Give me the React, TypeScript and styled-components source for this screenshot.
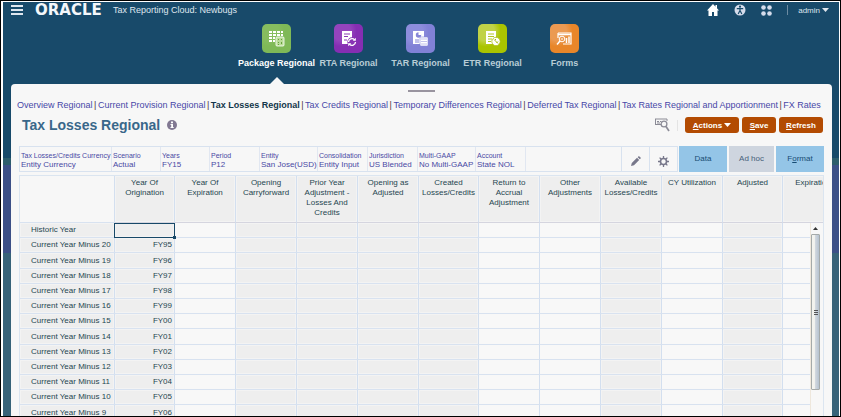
import React from "react";
import styled, { createGlobalStyle } from "styled-components";

const GlobalStyle = createGlobalStyle`
  *, *::before, *::after { box-sizing: border-box; }
  body { margin: 0; background: #fff; }
  body, button { font-family: "Liberation Sans", Arial, sans-serif; }
  button { border: 0; padding: 0; background: none; cursor: pointer; }
  svg { display: block; flex: none; }
`;

const Frame = styled.div`
  height: 100vh;
  overflow: hidden;
  border: 1px solid #000;
  padding: 1px 1px 0 2px;
  display: flex;
`;

const Shell = styled.div`
  flex: 1;
  min-width: 0;
  display: flex;
  flex-direction: column;
  padding: 0 7px 0 8px;
  background: linear-gradient(#184a6a 156px, #2d5d6c 156px 163px, #3c5087 163px 251px, #386379 251px);
`;

const Header = styled.header`
  height: 16px;
  display: flex;
  align-items: center;
  color: #dfe6ee;
  font-size: 9px;
`;

const MenuButton = styled.button`
  width: 12px;
  margin-right: 12px;
`;

const Brand = styled.span`
  width: 78px;
  color: #f4f7fa;
  font: bold 15px/14px "DejaVu Sans", sans-serif;
`;

const Product = styled.span`
  flex: 1;
`;

const HeaderTools = styled.nav`
  display: flex;
  align-items: center;
  gap: 15px;
  margin-right: 3px;
`;

const UserButton = styled.button`
  display: flex;
  align-items: center;
  gap: 2px;
  height: 10px;
  padding-left: 10px;
  border-left: 1px solid #6c8ba2;
  color: #dfe6ee;
  font-size: 8px;
`;

const Apps = styled.nav`
  display: flex;
  justify-content: center;
  height: 66px;
  padding: 6px 2px 0 0;
`;

const AppLink = styled.a<{ $active?: boolean }>`
  position: relative;
  width: 72px;
  display: flex;
  flex-direction: column;
  align-items: center;
  gap: 4px;
  color: ${(p) => (p.$active ? "#ffffff" : "#b9cdd6")};
  font: bold 9px/12px "Liberation Sans", Arial, sans-serif;
  text-decoration: none;
  white-space: nowrap;

  &::after {
    content: "";
    display: ${(p) => (p.$active ? "block" : "none")};
    position: absolute;
    bottom: 0;
    border: 7px solid transparent;
    border-top: 0;
    border-bottom-color: #f7f7f7;
  }
`;

const AppTile = styled.span<{ $tone: string; $glow: string }>`
  display: grid;
  place-items: center;
  width: 29px;
  height: 29px;
  border-radius: 5px;
  background: radial-gradient(circle at 25% 25%, ${(p) => p.$glow} 0 30%, ${(p) => p.$tone} 50%);
`;

const Panel = styled.main`
  flex: 1;
  min-height: 0;
  display: flex;
  flex-direction: column;
  padding: 6px 8px 0;
  border-radius: 4px 4px 0 0;
  background: #f7f7f7;
`;

const Handle = styled.button`
  align-self: center;
  width: 27px;
  height: 2px;
  background: #99949f;
`;

const LinkBar = styled.nav`
  display: flex;
  justify-content: space-between;
  margin: 7px 3px 0 -2px;
  color: #503838;
  font-size: 9px;
  line-height: 12px;
  white-space: nowrap;
`;

const PageLink = styled.a<{ $active?: boolean }>`
  color: ${(p) => (p.$active ? "#12364a" : "#4747a8")};
  font-weight: ${(p) => (p.$active ? "bold" : "normal")};
  text-decoration: none;
`;

const TitleRow = styled.div`
  display: flex;
  align-items: center;
  height: 16px;
  margin-top: 6px;
`;

const Title = styled.h1`
  margin: 0 7px 0 3px;
  color: #39678a;
  font-size: 14px;
  line-height: 16px;
`;

const IconButton = styled.button`
  display: grid;
  place-items: center;
`;

const TitleActions = styled.div`
  display: flex;
  align-items: center;
  gap: 3px;
  margin-left: auto;
  margin-right: 1px;
`;

const Rule = styled.span`
  width: 1px;
  height: 11px;
  margin: 0 4px;
  background: #e4e4e4;
`;

const ActionButton = styled.button<{ $width: number }>`
  display: flex;
  align-items: center;
  justify-content: center;
  gap: 2px;
  width: ${(p) => p.$width}px;
  height: 16px;
  border-radius: 3px;
  background: #b34b02;
  color: #fff;
  font-size: 8px;
  font-weight: bold;
`;

const PovRow = styled.div`
  display: flex;
  height: 26px;
  margin: 13px 0 3px;
`;

const PovBar = styled.div`
  flex: 1;
  min-width: 0;
  display: flex;
  border: 1px solid #d8e2ef;
  margin-right: 1px;
`;

const PovItem = styled.button<{ $width: number }>`
  width: ${(p) => p.$width}px;
  flex: none;
  display: flex;
  flex-direction: column;
  justify-content: center;
  padding: 2px 0 0 1px;
  border-right: 1px solid #e1e7f1;
  color: #4949a4;
  font-size: 8px;
  line-height: 10px;
  text-align: left;
  white-space: nowrap;
`;

const PovLabel = styled.span`
  font-size: 7px;
  line-height: 9px;
`;

const PovTool = styled.button`
  display: grid;
  place-items: center;
  width: 28px;
  padding-top: 4px;
  border-left: 1px solid #d8e2ef;
`;

const PovSpacer = styled.span`
  flex: 1;
`;

const Modes = styled.div`
  display: flex;
  gap: 2px;
`;

const ModeButton = styled.button<{ $muted?: boolean }>`
  width: ${(p) => (p.$muted ? 45 : 48)}px;
  padding-bottom: 2px;
  background: ${(p) => (p.$muted ? "#ced5df" : "#94c5e7")};
  color: ${(p) => (p.$muted ? "#45607a" : "#174c73")};
  font-size: 8px;
`;

const GridArea = styled.div`
  position: relative;
  flex: 1;
  min-height: 0;
  overflow: hidden;
  border: 1px solid #dbe5f0;
  border-bottom: 0;
`;

const Sheet = styled.table`
  width: max-content;
  table-layout: fixed;
  border-collapse: separate;
  border-spacing: 0;
  color: #1f4650;
  font-size: 8px;
`;

const Column = styled.col<{ $width: number }>`
  width: ${(p) => p.$width}px;
`;

const HeadCell = styled.th`
  height: 47px;
  padding: 2px 0 0;
  border-right: 1px solid #d3dfef;
  border-bottom: 1px solid #d5d5df;
  background: #eeeeee;
  box-shadow: inset 0 0 0 1px #f3f3f3;
  font-weight: normal;
  line-height: 10px;
  vertical-align: top;
  white-space: pre;
`;

const CornerCell = styled.td`
  border-right: 1px solid #d3dfef;
  border-bottom: 1px solid #d8e2f0;
`;

const Row = styled.tr`
  height: 15px;
  &:nth-child(5n + 3) { height: 16px; }
`;

const RowHead = styled.th`
  padding: 0 0 0 11px;
  border-right: 1px solid #d3dfef;
  border-bottom: 1px solid #d8e2f0;
  background: #eeeeee;
  box-shadow: inset 0 0 0 1px #f3f3f3;
  font-weight: normal;
  line-height: 10px;
  text-align: left;
`;

const Cell = styled.td<{ $shaded: boolean; $selected: boolean }>`
  position: relative;
  padding: 0 2px 0 0;
  border-right: 1px solid #d3dfef;
  border-bottom: 1px solid #d8e2f0;
  background: ${(p) => (p.$shaded ? "#eeeeee" : "#f8f8f8")};
  box-shadow: ${(p) => (p.$shaded ? "inset 0 0 0 1px #f3f3f3" : "none")};
  line-height: 10px;
  text-align: right;

  &::before {
    content: "";
    display: ${(p) => (p.$selected ? "block" : "none")};
    position: absolute;
    inset: 0 -1px -1px -1px;
    border: 1px solid #174868;
  }
  &::after {
    content: "";
    display: ${(p) => (p.$selected ? "block" : "none")};
    position: absolute;
    z-index: 1;
    right: -2px;
    bottom: -2px;
    width: 3px;
    height: 3px;
    background: #174868;
  }
`;

const ScrollRail = styled.div`
  position: absolute;
  top: 47px;
  right: 0;
  bottom: 0;
  width: 13px;
  padding-right: 3px;
  background: #f7f7f7;
  border-left: 1px solid #eee7dc;
`;

const ScrollUp = styled.button`
  display: grid;
  place-items: center;
  width: 100%;
  height: 11px;
`;

const ScrollThumb = styled.div`
  display: grid;
  place-items: center;
  width: 100%;
  height: 81%;
  border: 1px solid #a5aaa9;
  border-radius: 1px;
  background: linear-gradient(90deg, #f3f3ee 35%, #d3d9df 45%, #b5c2cf);
`;

const Caret = () => (
  <svg width="7" height="4" viewBox="0 0 7 4"><path d="M0 0h7L3.500 4z" fill="currentColor" /></svg>
);

const PackageIcon = () => (
  <svg width="17" height="17" viewBox="0 0 17 17" fill="#fff">
    <path d="M1 1h3v2H1zM5 1h3v2H5zM9 1h3v2H9zM13 1h2v2h-2zM1 4h3v2H1zM5 4h3v2H5zM9 4h3v2H9zM13 4h2v2h-2zM1 7h3v2H1zM5 7h2v2H5zM1 10h3v2H1zM5 10h2v2H5z" />
    <rect x="8" y="7" width="8" height="9" rx="1" fill="#b9dc98" stroke="#fff" strokeWidth=".8" />
    <path d="M10 9h1v1h-1zM13 9h1v1h-1zM10 12h1v1h-1zM13 12h1v2h-1zM10 14h1v1h-1z" fill="#65a13b" />
  </svg>
);

const RtaIcon = () => (
  <svg width="17" height="17" viewBox="0 0 17 17" fill="none">
    <path d="M2 1h10v8H9v5H2z" fill="#fff" />
    <path d="M4 4h6M4 6.500h4M4 10h3" stroke="#8a3bb5" />
    <circle cx="12" cy="12" r="4.700" fill="#8834b4" />
    <path d="M8.500 12a3.500 3.500 0 0 1 6-2.300M15.500 12a3.500 3.500 0 0 1-6 2.300" stroke="#fff" strokeWidth="1.300" />
    <path d="M15.800 7.800v3h-3zM8.200 16.200v-3h3z" fill="#fff" />
  </svg>
);

const TarIcon = () => (
  <svg width="17" height="17" viewBox="0 0 17 17" fill="#fff">
    <path d="M1 1h11v13H1z" />
    <circle cx="6.500" cy="5" r="2.700" fill="#8686d8" />
    <path d="M6.500 5V2A3 3 0 0 1 9.500 5z" />
    <path d="M3 10h4M3 12h4" stroke="#8686d8" />
    <rect x="8" y="7" width="8" height="9" rx="1" stroke="#8686d8" strokeWidth=".6" />
    <path d="M9.500 9h5M9.500 11.500h5M9.500 14h5" stroke="#8686d8" strokeDasharray="1 1" />
  </svg>
);

const EtrIcon = () => (
  <svg width="17" height="17" viewBox="0 0 17 17" fill="#fff">
    <path d="M2 1h10v13H2z" />
    <path d="M4 4h6M4 6.500h6M4 9h4M4 11.500h3" stroke="#b2c626" />
    <circle cx="12" cy="11.500" r="4.200" stroke="#a9bd10" strokeWidth=".8" />
    <path d="m10 9.500 4 4M11 9l1 1M12.500 13l1.500-1.500" stroke="#a9bd10" />
  </svg>
);

const FormsIcon = () => (
  <svg width="17" height="17" viewBox="0 0 17 17" fill="none" stroke="#fff">
    <path d="M2 3h13v11H7M2 3v5" strokeWidth="1.200" />
    <path d="M2 4.500h13" strokeWidth="1.500" />
    <circle cx="6" cy="9" r="2.800" />
    <path d="m4 11-3 3.500" strokeWidth="1.500" />
    <path d="M6 8v2" />
    <path d="M10.500 8v5M13 6.500V13" strokeWidth="1.500" />
  </svg>
);

const apps = [
  { name: "Package Regional", tone: "#7fb957", glow: "#86bd5f", icon: <PackageIcon />, active: true },
  { name: "RTA Regional", tone: "#862eb3", glow: "#9544bd", icon: <RtaIcon /> },
  { name: "TAR Regional", tone: "#8181d6", glow: "#8d8ddc", icon: <TarIcon /> },
  { name: "ETR Regional", tone: "#aac400", glow: "#c0d247", icon: <EtrIcon /> },
  { name: "Forms", tone: "#e88629", glow: "#eb9a52", icon: <FormsIcon /> },
];

const pages = [
  "Overview Regional",
  "Current Provision Regional",
  "Tax Losses Regional",
  "Tax Credits Regional",
  "Temporary Differences Regional",
  "Deferred Tax Regional",
  "Tax Rates Regional and Apportionment",
  "FX Rates",
];

const pov: [string, string, number][] = [
  ["Tax Losses/Credits Currency", "Entity Currency", 92],
  ["Scenario", "Actual", 49],
  ["Years", "FY15", 49],
  ["Period", "P12", 50],
  ["Entity", "San Jose(USD)", 58],
  ["Consolidation", "Entity Input", 50],
  ["Jurisdiction", "US Blended", 50],
  ["Multi-GAAP", "No Multi-GAAP", 58],
  ["Account", "State NOL", 50],
];

const columns = [
  { title: "Year Of\nOrigination", width: 60, shaded: true },
  { title: "Year Of\nExpiration", width: 61, shaded: false },
  { title: "Opening\nCarryforward", width: 61, shaded: true },
  { title: "Prior Year\nAdjustment -\nLosses And\nCredits", width: 61, shaded: true },
  { title: "Opening as\nAdjusted", width: 61, shaded: true },
  { title: "Created\nLosses/Credits", width: 60, shaded: true },
  { title: "Return to\nAccrual\nAdjustment", width: 61, shaded: false },
  { title: "Other\nAdjustments", width: 61, shaded: false },
  { title: "Available\nLosses/Credits", width: 61, shaded: true },
  { title: "CY Utilization", width: 61, shaded: false },
  { title: "Adjusted", width: 60, shaded: true },
  { title: "Expiration", width: 61, shaded: false },
];

const rows = [
  { label: "Historic Year", origin: "" },
  ...Array.from({ length: 12 }, (_, i) => ({
    label: `Current Year Minus ${20 - i}`,
    origin: `FY${String((95 + i) % 100).padStart(2, "0")}`,
  })),
];

export default function App() {
  return (
    <Frame>
      <GlobalStyle />
      <Shell>
        <Header>
          <MenuButton aria-label="Menu">
            <svg width="12" height="10" viewBox="0 0 12 10"><path d="M0 1h12M0 5h12M0 9h12" stroke="#dfe6ee" strokeWidth="2" /></svg>
          </MenuButton>
          <Brand>ORACLE</Brand>
          <Product>Tax Reporting Cloud: Newbugs</Product>
          <HeaderTools>
            <IconButton aria-label="Home">
              <svg width="12" height="12" viewBox="0 0 12 12"><path d="M6 0 0 6.500h1.500V12H5V8h2v4h3.500V6.500H12L10 4.300V1H8.500v1.700z" fill="#fff" /></svg>
            </IconButton>
            <IconButton aria-label="Accessibility">
              <svg width="12" height="12" viewBox="0 0 12 12">
                <circle cx="6" cy="6" r="5.500" fill="#d5dceb" />
                <circle cx="6" cy="2.700" r="1.100" fill="#184a6a" />
                <path d="M2.800 4.700h6.400M6 4.500v3M5.700 7 4.200 10M6.300 7l1.500 3" stroke="#184a6a" strokeWidth="1.200" />
              </svg>
            </IconButton>
            <IconButton aria-label="Applications">
              <svg width="11" height="11" viewBox="0 0 11 11" fill="#d5dceb">
                <circle cx="2.500" cy="2.500" r="2.300" /><circle cx="8.500" cy="2.500" r="2.300" />
                <circle cx="2.500" cy="8.500" r="2.300" /><circle cx="8.500" cy="8.500" r="2.300" />
              </svg>
            </IconButton>
            <UserButton>admin<Caret /></UserButton>
          </HeaderTools>
        </Header>

        <Apps>
          {apps.map((a) => (
            <AppLink key={a.name} href="#" $active={a.active}>
              <AppTile $tone={a.tone} $glow={a.glow}>{a.icon}</AppTile>
              {a.name}
            </AppLink>
          ))}
        </Apps>

        <Panel>
          <Handle aria-label="Collapse" />
          <LinkBar>
            {pages.map((name, i) => (
              <React.Fragment key={name}>
                {i > 0 && <span>|</span>}
                <PageLink href="#" $active={i === 2}>{name}</PageLink>
              </React.Fragment>
            ))}
          </LinkBar>

          <TitleRow>
            <Title>Tax Losses Regional</Title>
            <IconButton aria-label="Information">
              <svg width="10" height="10" viewBox="0 0 10 10">
                <circle cx="5" cy="5" r="5" fill="#817892" />
                <path d="M4 1.500h2v1.700H4zM3.500 4H6v3h.700v1H3.500V7h.700V5h-.700z" fill="#fff" />
              </svg>
            </IconButton>
            <TitleActions>
              <IconButton aria-label="Find">
                <svg width="15" height="14" viewBox="0 0 15 14" fill="none" stroke="#8b8b96">
                  <path d="M0 1h12M0 6.500h6" strokeWidth="1.200" />
                  <path d="M.500 1v5M12 1v2M2 3.500h2M5 3.500h1.500M2 5h3" />
                  <circle cx="9" cy="6" r="2.900" fill="#f7f7f7" strokeWidth="1.300" />
                  <path d="m11 8.500 3 4.500" strokeWidth="1.700" />
                </svg>
              </IconButton>
              <Rule />
              <ActionButton $width={54}><span><u>A</u>ctions</span><Caret /></ActionButton>
              <ActionButton $width={34}><span><u>S</u>ave</span></ActionButton>
              <ActionButton $width={44}><span><u>R</u>efresh</span></ActionButton>
            </TitleActions>
          </TitleRow>

          <PovRow>
            <PovBar>
              {pov.map(([label, value, width]) => (
                <PovItem key={label} $width={width}><PovLabel>{label}</PovLabel>{value}</PovItem>
              ))}
              <PovSpacer />
              <PovTool aria-label="Edit">
                <svg width="10" height="10" viewBox="0 0 10 10" fill="#77778a"><path d="M0 10 .800 7 6 1.800 8.200 4 3 9.200zM6.700 1.200 7.900 0 10 2.100 8.800 3.300z" /></svg>
              </PovTool>
              <PovTool aria-label="Settings">
                <svg width="11" height="11" viewBox="0 0 11 11" fill="none" stroke="#77778a">
                  <circle cx="5.500" cy="5.500" r="3" strokeWidth="1.600" />
                  <path d="M5.500 0v2M5.500 9v2M0 5.500h2M9 5.500h2M1.600 1.600 3 3M8 8l1.400 1.400M1.600 9.400 3 8M8 3l1.400-1.400" strokeWidth="1.300" />
                </svg>
              </PovTool>
            </PovBar>
            <Modes>
              <ModeButton>Data</ModeButton>
              <ModeButton $muted>Ad hoc</ModeButton>
              <ModeButton>F<u>o</u>rmat</ModeButton>
            </Modes>
          </PovRow>

          <GridArea>
            <Sheet>
              <colgroup>
                <Column $width={95} />
                {columns.map((c, i) => <Column key={i} $width={c.width} />)}
              </colgroup>
              <thead>
                <tr>
                  <CornerCell />
                  {columns.map((c, i) => <HeadCell key={i} scope="col">{c.title}</HeadCell>)}
                </tr>
              </thead>
              <tbody>
                {rows.map((r, y) => (
                  <Row key={r.label}>
                    <RowHead scope="row">{r.label}</RowHead>
                    {columns.map((c, x) => (
                      <Cell key={x} $shaded={c.shaded} $selected={x === 0 && y === 0}>{x === 0 ? r.origin : ""}</Cell>
                    ))}
                  </Row>
                ))}
              </tbody>
            </Sheet>
            <ScrollRail>
              <ScrollUp aria-label="Scroll up">
                <svg width="5" height="3" viewBox="0 0 5 3"><path d="M0 3h5L2.500 0z" fill="#333" /></svg>
              </ScrollUp>
              <ScrollThumb>
                <svg width="4" height="5" viewBox="0 0 4 5"><path d="M0 .500h4M0 2.500h4M0 4.500h4" stroke="#555" /></svg>
              </ScrollThumb>
            </ScrollRail>
          </GridArea>
        </Panel>
      </Shell>
    </Frame>
  );
}
